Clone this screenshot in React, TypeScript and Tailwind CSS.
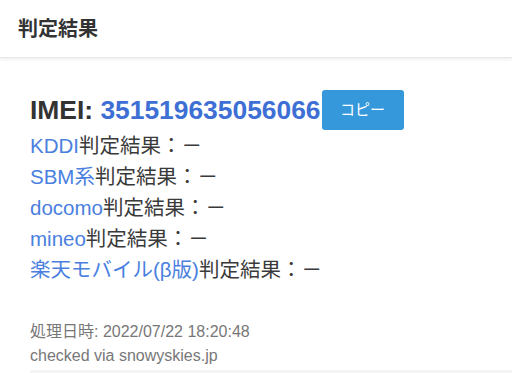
import React from "react";

const carriers = ["KDDI", "SBM系", "docomo", "mineo", "楽天モバイル(β版)"];

const App: React.FC = () => {
  return (
    <div
      className="w-[512px] h-[373px] bg-white overflow-hidden"
      style={{ fontFamily: '"Liberation Sans", "Noto Sans CJK JP", sans-serif' }}
    >
      {/* ヘッダー */}
      <div className="h-[58px] px-[18px] flex items-center border-b border-[#e6e6e6] shadow-[0_2px_3px_rgba(0,0,0,0.06)]">
        <h2 className="text-[20px] font-bold text-[#333]">判定結果</h2>
      </div>

      <div className="pl-[30px] pt-[32px]">
        <div className="flex items-center h-[40px]">
          <span className="text-[26.4px] font-bold text-[#333] leading-none">
            IMEI: <span className="text-[#3d6fd5]">351519635056066</span>
          </span>
          <button className="ml-[1px] w-[82px] h-[40px] bg-[#3498db] text-white text-[15px] rounded-[3px]">
            コピー
          </button>
        </div>

        <div className="mt-[1px] flex flex-col">
          {carriers.map((c) => (
            <div key={c} className="h-[31px] flex items-center text-[20.5px] text-[#3a3a3a]">
              <span className="text-[#4a7fe0]">{c}</span>
              判定結果：－
            </div>
          ))}
        </div>

        <div className="mt-[34px] text-[16px] text-[#777] leading-[24px]">
          <div>処理日時: 2022/07/22 18:20:48</div>
          <div>checked via snowyskies.jp</div>
        </div>

        <div className="mt-[2px] h-[8px] bg-[#f4f4f4]"></div>
      </div>
    </div>
  );
};

export default App;
